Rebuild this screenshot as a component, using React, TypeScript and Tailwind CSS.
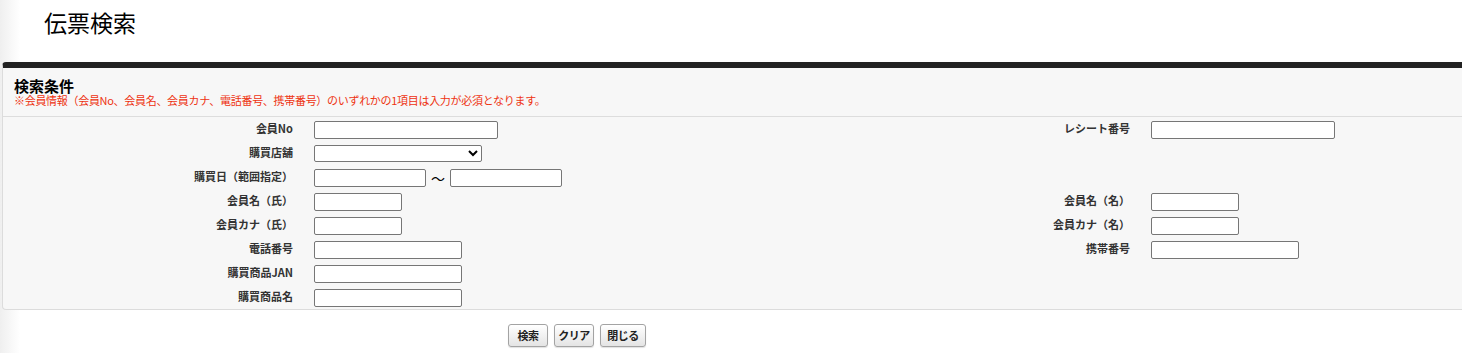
import React from 'react';

const inputCls =
  'block h-[18px] border border-[#767676] rounded-[2px] bg-white px-1 text-[11px] outline-none';

function Label({ children }: { children: React.ReactNode }) {
  return (
    <div className="pr-[21px] text-right text-[11px] font-bold leading-[14px] text-[#333]">
      {children}
    </div>
  );
}

function Btn({ children, w }: { children: React.ReactNode; w: string }) {
  return (
    <button
      type="button"
      className={`${w} h-[23px] px-0 rounded-[3px] border border-[#a3a3a3] bg-[linear-gradient(to_bottom,#ffffff,#e4e4e4)] text-[11px] font-bold leading-none tracking-[-0.5px] text-[#222] shadow-[0_1px_1px_rgba(0,0,0,0.12)]`}
    >
      {children}
    </button>
  );
}

export default function App() {
  return (
    <div className="min-h-screen w-full overflow-hidden bg-[linear-gradient(to_right,#efefef,#ffffff_20px)] font-['Noto_Sans_CJK_JP',sans-serif] text-black">
      {/* page title */}
      <div className="h-[62px] pl-[44px] pt-[5px]">
        <h1 className="text-[23px] font-normal leading-[34px]">伝票検索</h1>
      </div>

      {/* search panel */}
      <div className="ml-[2px] w-[1480px] rounded-[4px] border border-[#dcdcdc] border-t-[6px] border-t-[#222] bg-[#f7f7f7]">
        <div className="border-b border-[#dddddd] px-[11px] pt-[10px] pb-[9px]">
          <h2 className="text-[15px] font-bold leading-[16px]">検索条件</h2>
          <p className="text-[11px] leading-[13px] tracking-[-0.3px] text-[#ee3311]">
            ※会員情報（会員No、会員名、会員カナ、電話番号、携帯番号）のいずれかの1項目は入力が必須となります。
          </p>
        </div>

        <div className="grid grid-cols-[311px_600px_237px_1fr] auto-rows-[18px] gap-y-[6px] pt-[4px] pb-[2px]">
          <Label>会員No</Label>
          <div><input className={`${inputCls} w-[184px]`} /></div>
          <Label>レシート番号</Label>
          <div><input className={`${inputCls} w-[184px]`} /></div>

          <Label>購買店舗</Label>
          <div>
            <select className="block h-[17px] w-[168px] border border-[#767676] rounded-[2px] bg-white text-[11px]">
              <option></option>
            </select>
          </div>
          <div></div>
          <div></div>

          <Label>購買日（範囲指定）</Label>
          <div className="flex items-start">
            <input className={`${inputCls} w-[112px]`} />
            <span className="w-[24px] text-center text-[14px] leading-[18px]">～</span>
            <input className={`${inputCls} w-[112px]`} />
          </div>
          <div></div>
          <div></div>

          <Label>会員名（氏）</Label>
          <div><input className={`${inputCls} w-[88px]`} /></div>
          <Label>会員名（名）</Label>
          <div><input className={`${inputCls} w-[88px]`} /></div>

          <Label>会員カナ（氏）</Label>
          <div><input className={`${inputCls} w-[88px]`} /></div>
          <Label>会員カナ（名）</Label>
          <div><input className={`${inputCls} w-[88px]`} /></div>

          <Label>電話番号</Label>
          <div><input className={`${inputCls} w-[148px]`} /></div>
          <Label>携帯番号</Label>
          <div><input className={`${inputCls} w-[148px]`} /></div>

          <Label>購買商品JAN</Label>
          <div><input className={`${inputCls} w-[148px]`} /></div>
          <div></div>
          <div></div>

          <Label>購買商品名</Label>
          <div><input className={`${inputCls} w-[148px]`} /></div>
          <div></div>
          <div></div>
        </div>
      </div>

      {/* actions */}
      <div className="flex gap-[6px] pl-[508px] pt-[14px]">
        <Btn w="w-[40px]">検索</Btn>
        <Btn w="w-[40px]">クリア</Btn>
        <Btn w="w-[46px]">閉じる</Btn>
      </div>
    </div>
  );
}
